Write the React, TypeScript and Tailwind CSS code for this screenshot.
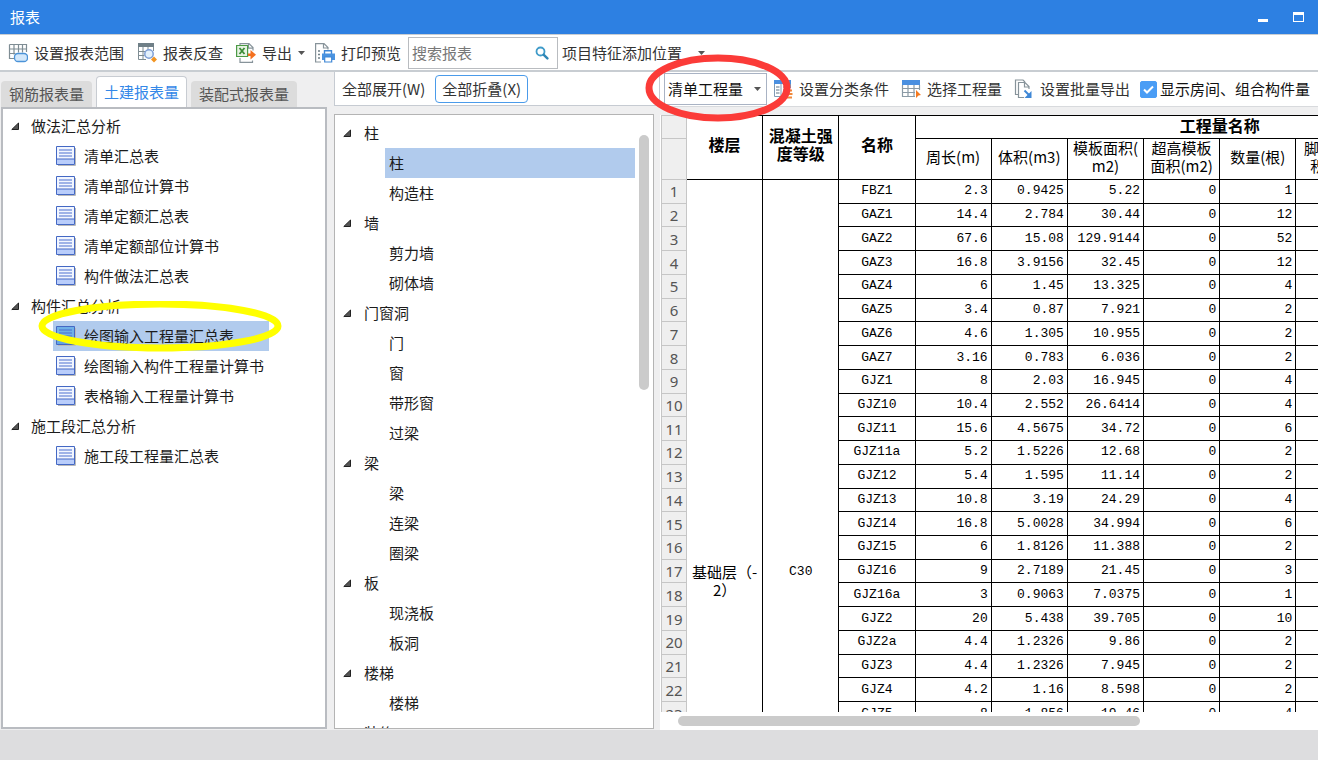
import React from 'react';
import clsx from 'clsx';

interface TreeGroup {
    name: string;
    items: string[];
}

const reportTree: TreeGroup[] = [
    {
        name: '做法汇总分析',
        items: [
            '清单汇总表',
            '清单部位计算书',
            '清单定额汇总表',
            '清单定额部位计算书',
            '构件做法汇总表',
        ],
    },
    {
        name: '构件汇总分析',
        items: ['绘图输入工程量汇总表', '绘图输入构件工程量计算书', '表格输入工程量计算书'],
    },
    { name: '施工段汇总分析', items: ['施工段工程量汇总表'] },
];

const componentTree: TreeGroup[] = [
    { name: '柱', items: ['柱', '构造柱'] },
    { name: '墙', items: ['剪力墙', '砌体墙'] },
    { name: '门窗洞', items: ['门', '窗', '带形窗', '过梁'] },
    { name: '梁', items: ['梁', '连梁', '圈梁'] },
    { name: '板', items: ['现浇板', '板洞'] },
    { name: '楼梯', items: ['楼梯'] },
    { name: '装修', items: [] },
];

const quantityHeaders = [
    '周长(m)',
    '体积(m3)',
    '模板面积(\nm2)',
    '超高模板\n面积(m2)',
    '数量(根)',
    '脚手架面\n积(m2)',
    '',
    '',
];

// name, perimeter, volume, formwork, extra-height formwork, count
const rows: string[][] = [
    ['FBZ1', '2.3', '0.9425', '5.22', '0', '1'],
    ['GAZ1', '14.4', '2.784', '30.44', '0', '12'],
    ['GAZ2', '67.6', '15.08', '129.9144', '0', '52'],
    ['GAZ3', '16.8', '3.9156', '32.45', '0', '12'],
    ['GAZ4', '6', '1.45', '13.325', '0', '4'],
    ['GAZ5', '3.4', '0.87', '7.921', '0', '2'],
    ['GAZ6', '4.6', '1.305', '10.955', '0', '2'],
    ['GAZ7', '3.16', '0.783', '6.036', '0', '2'],
    ['GJZ1', '8', '2.03', '16.945', '0', '4'],
    ['GJZ10', '10.4', '2.552', '26.6414', '0', '4'],
    ['GJZ11', '15.6', '4.5675', '34.72', '0', '6'],
    ['GJZ11a', '5.2', '1.5226', '12.68', '0', '2'],
    ['GJZ12', '5.4', '1.595', '11.14', '0', '2'],
    ['GJZ13', '10.8', '3.19', '24.29', '0', '4'],
    ['GJZ14', '16.8', '5.0028', '34.994', '0', '6'],
    ['GJZ15', '6', '1.8126', '11.388', '0', '2'],
    ['GJZ16', '9', '2.7189', '21.45', '0', '3'],
    ['GJZ16a', '3', '0.9063', '7.0375', '0', '1'],
    ['GJZ2', '20', '5.438', '39.705', '0', '10'],
    ['GJZ2a', '4.4', '1.2326', '9.86', '0', '2'],
    ['GJZ3', '4.4', '1.2326', '7.945', '0', '2'],
    ['GJZ4', '4.2', '1.16', '8.598', '0', '2'],
    ['GJZ5', '8', '1.856', '19.46', '0', '4'],
];

export default function App() {
    return (
        <div className="h-screen flex flex-col overflow-hidden bg-[#efeff0] font-['Noto_Sans_CJK_SC',sans-serif] text-[15px] leading-5 text-[#1c1c1c]">
            <TitleBar />
            <MainToolbar />
            <main className="flex-1 min-h-0 flex">
                <ReportPanel />
                <ComponentPanel />
                <SheetPanel />
            </main>
            <footer className="h-[30px] shrink-0 bg-[#dddddf]" />
        </div>
    );
}

function TitleBar() {
    return (
        <header className="h-[34px] shrink-0 flex items-center justify-between px-2.5 bg-[#2d80e2] text-white">
            <h1>报表</h1>
            <div className="flex gap-[15px]">
                <button aria-label="最小化" className="w-5 h-5 flex items-center justify-center">
                    <svg width="10" height="10" viewBox="0 0 10 10">
                        <path d="M0 7h10v3H0z" fill="#fff" />
                    </svg>
                </button>
                <button aria-label="最大化" className="w-5 h-5 flex items-center justify-center">
                    <svg width="11" height="10" viewBox="0 0 11 10">
                        <path d="M0 0h11v10H0zM1 3v6h9V3z" fill="#fff" fillRule="evenodd" />
                    </svg>
                </button>
            </div>
        </header>
    );
}

function MainToolbar() {
    return (
        <div className="h-[38px] shrink-0 flex items-center gap-px pl-0.5 bg-white border-t border-b-2 border-[#c8cdd2] text-[#333]">
            <ToolButton icon={<RangeIcon />}>设置报表范围</ToolButton>
            <ToolButton icon={<LookupIcon />}>报表反查</ToolButton>
            <ToolButton icon={<ExportIcon />} dropdown>
                导出
            </ToolButton>
            <ToolButton icon={<PrintIcon />}>打印预览</ToolButton>
            <label className="w-[150px] h-8 flex items-center border border-[#b9bcc0] pl-[3px] pr-2">
                <input
                    type="text"
                    aria-label="搜索报表"
                    placeholder="搜索报表"
                    className="min-w-0 flex-1 outline-none placeholder:text-[#777]"
                />
                <svg width="14" height="14" viewBox="0 0 14 14" fill="none">
                    <circle cx="5.5" cy="5.5" r="4" stroke="#3f9bc9" strokeWidth="1.8" />
                    <path d="M8.8 8.8l3.6 3.6" stroke="#2f86b5" strokeWidth="2.4" strokeLinecap="round" />
                </svg>
            </label>
            <button className="flex items-center gap-4 px-[3px]">
                项目特征添加位置
                <Caret />
            </button>
        </div>
    );
}

function ToolButton(props: {
    icon: React.ReactNode;
    children: React.ReactNode;
    dropdown?: boolean;
}) {
    return (
        <button
            className={clsx(
                'shrink-0 flex items-center gap-1.5 h-7 pl-1.5 whitespace-nowrap',
                props.dropdown ? 'pr-[3px]' : 'pr-1.5'
            )}
        >
            {props.icon}
            {props.children}
            {props.dropdown && <Caret />}
        </button>
    );
}

function ReportPanel() {
    const tabs = ['钢筋报表量', '土建报表量', '装配式报表量'];
    const active = '土建报表量';
    const selected = '绘图输入工程量汇总表';

    return (
        <section className="w-[327px] shrink-0 flex flex-col">
            <div role="tablist" className="h-[35px] shrink-0 flex items-end gap-1 pl-px">
                {tabs.map((tab) => (
                    <button
                        key={tab}
                        role="tab"
                        aria-selected={tab === active}
                        className={clsx(
                            'rounded-t',
                            tab === active
                                ? 'h-[31px] px-[7px] bg-white border border-b-0 border-[#c8ccd2] text-[#3388e8]'
                                : 'h-[26px] px-2 bg-[#dcdcdc] text-[#555]'
                        )}
                    >
                        {tab}
                    </button>
                ))}
            </div>
            <div className="flex-1 min-h-0 ml-px mb-px pt-0.5 bg-white border-2 border-[#b9bcc1]">
                {reportTree.map((group) => (
                    <div key={group.name}>
                        <div className="h-[30px] flex items-center gap-[11px] pl-2">
                            <Expander />
                            {group.name}
                        </div>
                        <ul className="ml-[50px] w-fit">
                            {group.items.map((item) => (
                                <li
                                    key={item}
                                    className={clsx(
                                        'relative h-[30px] flex items-center gap-2 pl-[3px] pr-[5px] whitespace-nowrap',
                                        item === selected && 'bg-[#b1cbed]'
                                    )}
                                >
                                    <ReportIcon active={item === selected} />
                                    {item}
                                    {item === selected && (
                                        <svg
                                            className="absolute -left-4 -top-5 z-10 pointer-events-none"
                                            width="246"
                                            height="52"
                                            viewBox="0 0 246 52"
                                            fill="none"
                                        >
                                            <ellipse cx="123" cy="25" rx="118" ry="22" stroke="#ffff00" strokeWidth="7" />
                                        </svg>
                                    )}
                                </li>
                            ))}
                        </ul>
                    </div>
                ))}
            </div>
        </section>
    );
}

function ComponentPanel() {
    return (
        <section className="w-[333px] shrink-0 flex flex-col gap-2 pl-[7px]">
            <div className="h-[34px] shrink-0 flex items-center gap-2.5 px-[7px] bg-white border border-t-0 border-[#c6cbd2] text-[#333]">
                <button>全部展开(W)</button>
                <button className="h-7 px-1.5 rounded border border-[#4a9bea]">全部折叠(X)</button>
            </div>
            <div className="flex-1 min-h-0 flex gap-1 mr-1.5 mb-px pr-1 overflow-hidden bg-white border border-[#b4b4b4]">
                <div className="flex-1 pt-[3px]">
                    {componentTree.map((group, index) => (
                        <div key={group.name}>
                            <div className="h-[30px] flex items-center gap-3 pl-2">
                                <Expander />
                                {group.name}
                            </div>
                            <ul className="ml-[50px]">
                                {group.items.map((item, i) => (
                                    <li
                                        key={item}
                                        className={clsx(
                                            'h-[30px] flex items-center px-1',
                                            index === 0 && i === 0 && 'bg-[#b1cbed]'
                                        )}
                                    >
                                        {item}
                                    </li>
                                ))}
                            </ul>
                        </div>
                    ))}
                </div>
                <div className="w-2.5 h-[255px] mt-5 rounded-full bg-[#cbcbcb]" />
            </div>
        </section>
    );
}

function SheetPanel() {
    return (
        <section className="flex-1 min-w-0 flex flex-col gap-2">
            <div className="h-[35px] shrink-0 flex items-center pl-1 bg-white border-b border-[#d8dadd] text-[#333]">
                <div className="relative w-[103px] shrink-0">
                    <select
                        aria-label="工程量类型"
                        className="w-full h-8 appearance-none pl-[3px] border border-[#a9b3c4] bg-white text-[#111] outline-none"
                    >
                        <option>清单工程量</option>
                        <option>定额工程量</option>
                    </select>
                    <span className="absolute right-1.5 top-3.5 flex h-1 pointer-events-none">
                        <Caret />
                    </span>
                    <svg
                        className="absolute -left-5 -top-5 z-10 pointer-events-none"
                        width="148"
                        height="70"
                        viewBox="0 0 148 70"
                        fill="none"
                    >
                        <ellipse cx="74" cy="35" rx="69" ry="30" stroke="#fb3b38" strokeWidth="7" />
                    </svg>
                </div>
                <ToolButton icon={<ClassifyIcon />}>设置分类条件</ToolButton>
                <ToolButton icon={<SelectIcon />}>选择工程量</ToolButton>
                <ToolButton icon={<BatchIcon />}>设置批量导出</ToolButton>
                <label className="shrink-0 flex items-center gap-[3px] pl-1 whitespace-nowrap text-[#111]">
                    <span className="relative flex">
                        <input
                            type="checkbox"
                            defaultChecked
                            className="peer w-[17px] h-[17px] appearance-none rounded-xs border border-[#4a9df5] checked:bg-[#4a9df5]"
                        />
                        <svg
                            className="absolute inset-0 pointer-events-none invisible peer-checked:visible"
                            width="17"
                            height="17"
                            viewBox="0 0 17 17"
                            fill="none"
                        >
                            <path d="M4 8.5l3 3L13 5.5" stroke="#fff" strokeWidth="2" />
                        </svg>
                    </span>
                    显示房间、组合构件量
                </label>
            </div>
            <div className="flex-1 min-h-0 flex flex-col bg-white">
                <div className="flex-1 min-h-0 overflow-hidden pl-px">
                    <QuantityTable />
                </div>
                <div className="h-[18px] shrink-0 pt-1 pl-[18px]">
                    <div className="w-[462px] h-2.5 rounded-full bg-[#cbcbcb]" />
                </div>
            </div>
        </section>
    );
}

function QuantityTable() {
    const line = 'border-r border-b border-black';
    const gutter = 'bg-[#efefef] border-l border-r border-b border-[#c6c6c6] font-normal';

    return (
        <table className="w-[864px] h-[611px] table-fixed border-separate border-spacing-0 leading-[18px] text-black">
            <colgroup>
                <col className="w-[26px]" />
                <col span={11} />
            </colgroup>
            <thead>
                <tr className="h-6 text-base leading-[18px]">
                    <td className={clsx(gutter, 'border-t')} />
                    <th rowSpan={2} className={clsx(line, 'border-t p-0 pb-2')}>楼层</th>
                    <th rowSpan={2} className={clsx(line, 'border-t p-0 pb-2')}>
                        混凝土强
                        <br />
                        度等级
                    </th>
                    <th rowSpan={2} className={clsx(line, 'border-t p-0 pb-2')}>名称</th>
                    <th colSpan={8} className={clsx(line, 'border-t p-0 pb-1')}>工程量名称</th>
                </tr>
                <tr className="h-[41px]">
                    <td className={gutter} />
                    {quantityHeaders.map((header, index) => (
                        <th key={index} className={clsx(line, 'p-0 pb-1 font-normal whitespace-pre-line')}>
                            {header}
                        </th>
                    ))}
                </tr>
            </thead>
            <tbody className="font-['Liberation_Mono','Noto_Sans_CJK_SC',monospace] text-[13px]">
                {rows.map(([name, ...values], index) => (
                    <tr key={name}>
                        <th className={clsx(gutter, "p-0 font-['Noto_Sans',sans-serif] text-[15px] text-[#555]")}>
                            {index + 1}
                        </th>
                        {index === 0 && (
                            <>
                                <td rowSpan={rows.length} className={clsx(line, "p-0 pt-[383px] align-top text-center font-['Noto_Sans_CJK_SC',sans-serif] text-[15px]")}>
                                    基础层（-
                                    <br />
                                    2）
                                </td>
                                <td rowSpan={rows.length} className={clsx(line, 'p-0 pt-[383px] align-top text-center')}>
                                    C30
                                </td>
                            </>
                        )}
                        <td className={clsx(line, 'p-0 text-center')}>{name}</td>
                        {values.map((value, i) => (
                            <td key={i} className={clsx(line, 'p-0 pr-[3px] text-right')}>
                                {value}
                            </td>
                        ))}
                        <td className={line} />
                        <td className={line} />
                        <td className={line} />
                    </tr>
                ))}
            </tbody>
        </table>
    );
}

function Caret() {
    return (
        <svg width="7" height="4" viewBox="0 0 7 4" className="shrink-0">
            <path d="M0 0h7L3.5 4z" fill="#555" />
        </svg>
    );
}

function Expander() {
    return (
        <svg width="9" height="9" viewBox="0 0 9 9" className="shrink-0">
            <path d="M7.5 1v6.5H.8z" fill="#555" stroke="#222" strokeWidth="1" strokeLinejoin="round" />
        </svg>
    );
}

function ReportIcon(props: { active: boolean }) {
    return (
        <svg width="20" height="20" viewBox="0 0 20 20" className="shrink-0">
            <path d="M2 19.5h17.5V2" stroke="#b9b9b9" fill="none" />
            <path d="M.5.5h18v18H.5z" fill={props.active ? '#6fb0e6' : '#f2f6ff'} stroke="#4468c4" />
            <path d="M1 13h17v5H1z" fill={props.active ? '#62a4e4' : '#b9cdfb'} />
            <path d="M1 13h17" stroke="#4468c4" />
            <path d="M3 4h13M3 7h13M3 10h13" stroke="#4a6fd0" strokeWidth="1.2" />
        </svg>
    );
}

function RangeIcon() {
    return (
        <svg width="20" height="20" viewBox="0 0 20 20" fill="none" className="shrink-0">
            <path d="M1.5 1.5h17V9M1.500 1.500v14H6M1.500 6h17M1.500 10.500h6M6 1.500v10M10.500 1.500v8M14.500 1.500v8" stroke="#7f8d94" strokeWidth="1.2" />
            <rect x="6.5" y="10.5" width="13" height="8" rx="3.5" fill="#d3e8fb" stroke="#4b93d8" strokeWidth="1.3" />
        </svg>
    );
}

function LookupIcon() {
    return (
        <svg width="20" height="20" viewBox="0 0 20 20" fill="none" className="shrink-0">
            <path d="M1 0h16v4H1z" fill="#6f7f87" />
            <path d="M1.5 4v12.500H9M1.500 8.500h7M1.500 12.500h6M6 4v12.500M11 4v3M16.500 4v4" stroke="#7f8d94" />
            <circle cx="12" cy="11" r="4.2" fill="#e4f1fd" stroke="#7f9fd6" strokeWidth="1.5" />
            <path d="M17 13.500l3 3-3 3-3-3z" fill="#f29422" />
        </svg>
    );
}

function ExportIcon() {
    return (
        <svg width="20" height="20" viewBox="0 0 20 20" fill="none" className="shrink-0">
            <path d="M4 2.500V.6h9l4 4v3M12.500.6v4.500H17M4 15v4.400h12.500v-2" stroke="#87939a" strokeWidth="1.2" />
            <path d="M.6 2.500h11v11H.6z" fill="#e7f3e3" stroke="#4c9a45" strokeWidth="1.2" />
            <path d="M3.500 5l5 6M8.500 5l-5 6" stroke="#3d8c37" strokeWidth="1.8" />
            <path d="M12 10.500h2.500V7l5.500 4.700-5.500 4.800V13H12z" fill="#f4701f" />
        </svg>
    );
}

function PrintIcon() {
    return (
        <svg width="20" height="20" viewBox="0 0 20 20" fill="none" className="shrink-0">
            <path d="M6 19H.6V.6H9l4 4v2M8.500.6V5H13" stroke="#87939a" strokeWidth="1.2" />
            <path d="M3 8h2M3 11.500h2M3 15h2" stroke="#6f7f87" strokeWidth="1.6" />
            <path d="M9.500 11V7.700h7V11" stroke="#3f87d6" strokeWidth="1.4" />
            <path d="M7 10.500h13v6.500H7z" fill="#4a93e0" />
            <path d="M9.700 14h7v5h-7z" fill="#fff" stroke="#3f87d6" strokeWidth="1.2" />
        </svg>
    );
}

function ClassifyIcon() {
    return (
        <svg width="20" height="20" viewBox="0 0 20 20" fill="none" className="shrink-0">
            <path d="M1 1h17v4H1z" fill="#4a8fe0" />
            <path d="M1.5 5v12.500H12M8 5v12M17.500 5v4" stroke="#7f9ab5" />
            <path d="M3 8h3.500M3 11h3.500M3 14h3.500M10 8h5M10 11h3" stroke="#5d7488" strokeWidth="1.2" />
            <path d="M13 11.500h6M12.500 15h7M13 18.500h6" stroke="#f08a3c" strokeWidth="2" />
        </svg>
    );
}

function SelectIcon() {
    return (
        <svg width="20" height="20" viewBox="0 0 20 20" fill="none" className="shrink-0">
            <path d="M1 1h18v5H1z" fill="#4a8fe0" />
            <path d="M1.5 6v11.500H14M1.500 9.500h17M1.500 13.500H14M7 6v11.500M13 6v11.500M18.500 6v5" stroke="#8b9aa5" strokeWidth="1.2" />
            <path d="M15 11l5 5-2.500.5L15 19z" fill="#f4791f" />
        </svg>
    );
}

function BatchIcon() {
    return (
        <svg width="20" height="20" viewBox="0 0 20 20" fill="none" className="shrink-0">
            <path d="M4 15.500H1.500V1H9l2 2" stroke="#87939a" strokeWidth="1.2" />
            <path d="M10 18.500H4.500V3.500H11l4 4V10M10.500 3.500V8H15" stroke="#87939a" strokeWidth="1.2" />
            <path d="M10.500 11.500l5 5" stroke="#3f87d6" strokeWidth="2" />
            <path d="M17.500 12v7h-7z" fill="#3f87d6" />
        </svg>
    );
}
